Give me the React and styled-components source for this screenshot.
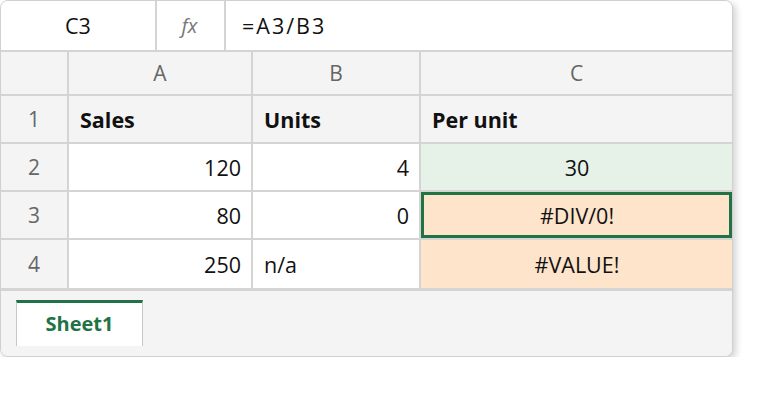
import React from 'react';
import styled, { createGlobalStyle, css } from 'styled-components';

const GlobalStyle = createGlobalStyle`
	html, body {
		margin: 0;
		padding: 0;
		background: #ffffff;
	}
	body {
		font-family: 'Open Sans', 'Noto Sans', sans-serif;
		color: #111;
	}
`;

const LINE = '#d4d4d4';

const Workbook = styled.div`
	width: 733px;
	height: 357px;
	box-sizing: border-box;
	border: 1px solid #d0d0d0;
	border-radius: 8px;
	overflow: hidden;
	background: #f4f4f4;
	box-shadow: 3px 3px 7px rgba(0, 0, 0, 0.18);
	display: flex;
	flex-direction: column;
`;

const FormulaBar = styled.div`
	display: grid;
	grid-template-columns: 156px 69px 1fr;
	height: 51px;
	box-sizing: border-box;
	border-bottom: 2px solid ${LINE};
	background: #fff;
	font-size: 21.5px;
`;

const NameBox = styled.div`
	display: flex;
	align-items: center;
	justify-content: center;
	border-right: 2px solid ${LINE};
	color: #111;
`;

const FxLabel = styled.div`
	display: flex;
	align-items: center;
	justify-content: center;
	border-right: 2px solid ${LINE};
	color: #777;
	font-style: italic;
	font-size: 20px;
	padding-right: 2px;
`;

const FormulaInput = styled.div`
	display: flex;
	align-items: center;
	padding-left: 16px;
	color: #111;
	letter-spacing: 2px;
`;

const Grid = styled.div`
	display: grid;
	grid-template-columns: 68px 184px 168px 1fr;
	grid-template-rows: 44px repeat(4, 48px);
	border-bottom: 3px solid ${LINE};
	font-size: 21.5px;
`;

const Cell = styled.div`
	display: flex;
	align-items: center;
	box-sizing: border-box;
	padding: 0 10px 0 11px;
	border-bottom: 2px solid ${LINE};
	border-right: 2px solid ${LINE};
	background: ${({ $fill }) => $fill || '#fff'};
	justify-content: ${({ $align }) =>
		$align === 'right' ? 'flex-end' : $align === 'center' ? 'center' : 'flex-start'};
	font-weight: ${({ $bold }) => ($bold ? 700 : 400)};
	&:nth-child(4n) {
		border-right: none;
	}
	${({ $last }) =>
		$last &&
		css`
			border-bottom: none;
		`}
	${({ $selected }) =>
		$selected &&
		css`
			box-shadow: inset 0 0 0 3px #217346;
		`}
`;

const HeadCell = styled(Cell)`
	background: #f4f4f4;
	color: #666;
	justify-content: center;
	padding: 0;
	font-weight: 400;
	font-size: 21px;
`;

const TabBar = styled.div`
	flex: 1;
	background: #f4f4f4;
	padding: 9px 0 0 15px;
`;

const SheetTab = styled.div`
	width: 127px;
	height: 46px;
	box-sizing: border-box;
	background: #fff;
	border-top: 3px solid #217346;
	border-left: 1px solid #c8c8c8;
	border-right: 1px solid #c8c8c8;
	display: flex;
	align-items: center;
	justify-content: center;
	color: #217346;
	font-weight: 700;
	font-size: 20px;
	padding-bottom: 2px;
`;

const GREEN = '#e6f2e8';
const PEACH = '#fde4cb';

const rows = [
	{ n: 1, a: 'Sales', b: 'Units', c: 'Per unit', header: true },
	{ n: 2, a: '120', b: '4', c: '30', cFill: GREEN },
	{ n: 3, a: '80', b: '0', c: '#DIV/0!', cFill: PEACH, selected: true },
	{ n: 4, a: '250', b: 'n/a', bLeft: true, c: '#VALUE!', cFill: PEACH },
];

export default function App() {
	return (
		<>
			<GlobalStyle />
			<Workbook>
				<FormulaBar>
					<NameBox>C3</NameBox>
					<FxLabel>fx</FxLabel>
					<FormulaInput>=A3/B3</FormulaInput>
				</FormulaBar>
				<Grid>
					<HeadCell />
					<HeadCell>A</HeadCell>
					<HeadCell>B</HeadCell>
					<HeadCell>C</HeadCell>
					{rows.map((r, i) => {
						const last = i === rows.length - 1;
						return (
							<React.Fragment key={r.n}>
								<HeadCell $last={last}>{r.n}</HeadCell>
								<Cell
									$last={last}
									$bold={r.header}
									$fill={r.header ? '#f4f4f4' : undefined}
									$align={r.header ? 'left' : 'right'}
								>
									{r.a}
								</Cell>
								<Cell
									$last={last}
									$bold={r.header}
									$fill={r.header ? '#f4f4f4' : undefined}
									$align={r.header || r.bLeft ? 'left' : 'right'}
								>
									{r.b}
								</Cell>
								<Cell
									$last={last}
									$bold={r.header}
									$fill={r.header ? '#f4f4f4' : r.cFill}
									$align={r.header ? 'left' : 'center'}
									$selected={r.selected}
								>
									{r.c}
								</Cell>
							</React.Fragment>
						);
					})}
				</Grid>
				<TabBar>
					<SheetTab>Sheet1</SheetTab>
				</TabBar>
			</Workbook>
		</>
	);
}
